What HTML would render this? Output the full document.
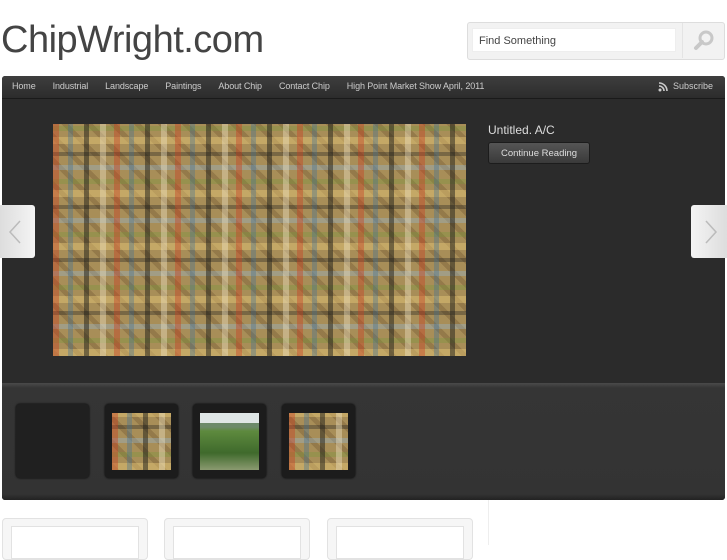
<!DOCTYPE html>
<html><head><style>
body{margin:0;width:727px;height:545px;overflow:hidden;background:#fff;font-family:"Liberation Sans",sans-serif;position:relative}
.a{position:absolute}
.nav span{margin-right:17px}
.paint{background:
repeating-linear-gradient(90deg,rgba(200,60,30,.4) 0 6px,transparent 6px 15px,rgba(60,110,150,.35) 15px 20px,transparent 20px 31px,rgba(30,30,25,.5) 31px 36px,transparent 36px 47px,rgba(240,230,200,.4) 47px 53px,transparent 53px 61px),
repeating-linear-gradient(0deg,rgba(230,200,120,.45) 0 7px,transparent 7px 13px,rgba(120,150,60,.35) 13px 18px,transparent 18px 27px,rgba(150,180,200,.4) 27px 32px,transparent 32px 41px,rgba(30,30,30,.35) 41px 45px,transparent 45px 53px),
repeating-linear-gradient(45deg,rgba(90,60,30,.25) 0 5px,transparent 5px 17px),
#a88e58}
.th{position:absolute;top:404px;width:73px;height:74px;background:#1c1c1c;border-radius:4px;box-shadow:0 0 2px #000}
.th div{position:absolute;left:7px;top:9px;width:59px;height:57px}
.box{position:absolute;top:518px;width:144px;height:40px;border:1px solid #e2e2e2;border-radius:4px;background:#f6f6f6}
.box div{position:absolute;left:8px;top:7px;right:8px;bottom:0;background:#fff;border:1px solid #e2e2e2}
</style></head><body>
<div class="a" style="left:1px;top:19px;font-size:38px;color:#444;letter-spacing:-0.5px">ChipWright.com</div>
<div class="a" style="left:467px;top:22px;width:256px;height:36px;border:1px solid #ddd;border-radius:3px;background:#f2f2f2"></div>
<div class="a" style="left:472px;top:28px;width:204px;height:24px;background:#fff;border:1px solid #eee;font-size:11px;color:#444;line-height:24px;padding-left:6px;box-sizing:border-box">Find Something</div>
<div class="a" style="left:682px;top:23px;width:1px;height:35px;background:#e4e4e4"></div>
<svg class="a" style="left:693px;top:29px" width="22" height="22"><circle cx="13" cy="9" r="6" fill="none" stroke="#c8c8c8" stroke-width="3"/><line x1="9" y1="13" x2="3" y2="19" stroke="#c8c8c8" stroke-width="4" stroke-linecap="round"/></svg>
<div class="a" style="left:2px;top:76px;width:723px;height:424px;background:#2b2b2b;border-radius:3px"></div>
<div class="a nav" style="left:2px;top:76px;width:723px;height:23px;background:linear-gradient(#3e3e3e,#2c2c2c);border-bottom:1px solid #1a1a1a;border-radius:3px 3px 0 0;color:#ccc;font-size:9px;letter-spacing:-0.1px;line-height:21px;padding-left:10px;box-sizing:border-box"><span>Home</span><span>Industrial</span><span>Landscape</span><span>Paintings</span><span>About Chip</span><span>Contact Chip</span><span>High Point Market Show April, 2011</span></div>
<svg class="a" style="left:658px;top:82px" width="10" height="10"><circle cx="2" cy="8" r="1.5" fill="#ccc"/><path d="M1 4a5 5 0 0 1 5 5M1 1a8 8 0 0 1 8 8" fill="none" stroke="#ccc" stroke-width="1.6"/></svg>
<div class="a" style="left:673px;top:76px;line-height:21px;font-size:9px;color:#ccc">Subscribe</div>
<div class="a paint" style="left:53px;top:124px;width:413px;height:232px"></div>
<div class="a" style="left:488px;top:123px;color:#ddd;font-size:12px">Untitled. A/C</div>
<div class="a" style="left:488px;top:142px;width:102px;height:22px;background:linear-gradient(#555,#3a3a3a);border:1px solid #1c1c1c;border-radius:3px;color:#ddd;font-size:9.5px;line-height:21px;text-align:center;box-sizing:border-box">Continue Reading</div>
<div class="a" style="left:0;top:205px;width:35px;height:53px;background:linear-gradient(90deg,#ddd,#f4f4f4);border-radius:0 3px 3px 0"></div>
<svg class="a" style="left:8px;top:220px" width="14" height="24"><path d="M12 1L2 12l10 11" fill="none" stroke="#bbb" stroke-width="1.5"/></svg>
<div class="a" style="left:691px;top:205px;width:36px;height:53px;background:linear-gradient(90deg,#f4f4f4,#ddd);border-radius:3px 0 0 3px"></div>
<svg class="a" style="left:704px;top:220px" width="14" height="24"><path d="M2 1l10 11L2 23" fill="none" stroke="#bbb" stroke-width="1.5"/></svg>
<div class="a" style="left:2px;top:383px;width:723px;height:117px;background:linear-gradient(#4a4a4a,#353535 5px,#333 95%,#222);border-radius:0 0 3px 3px"></div>
<div class="th" style="left:16px;background:#202020"></div>
<div class="th" style="left:105px"><div class="paint"></div></div>
<div class="th" style="left:193px"><div style="background:linear-gradient(#dfe6e6 0 10px,#6c8a6a 10px 14px,#5e8a3e 18px,#3f6a2c 70%,#8a9a70)"></div></div>
<div class="th" style="left:282px"><div class="paint"></div></div>
<div class="a" style="left:488px;top:500px;width:1px;height:45px;background:#eee"></div>
<div class="box" style="left:2px"><div></div></div>
<div class="box" style="left:164px"><div></div></div>
<div class="box" style="left:327px"><div></div></div>
</body></html>
